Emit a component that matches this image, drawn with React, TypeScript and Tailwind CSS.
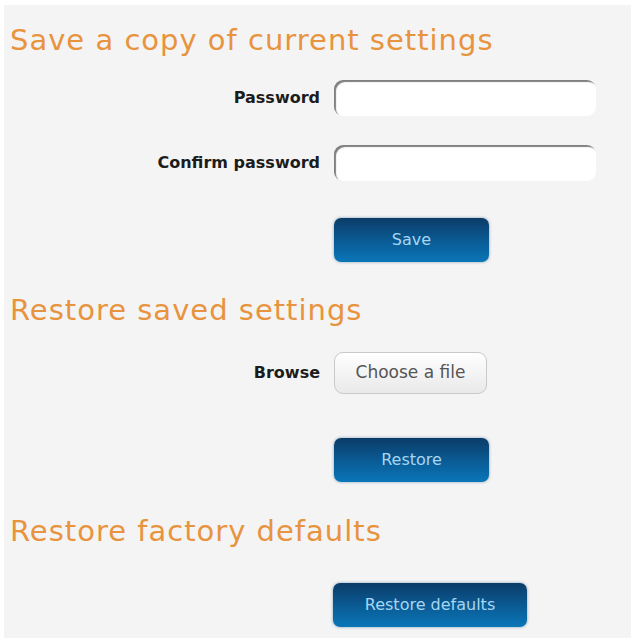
export default function App() {
  const heading = 'text-[29px] leading-[36px] text-[#e8933e] tracking-[1px]'
  const label = 'w-[310px] shrink-0 text-right text-[16px] font-bold text-[#1c1c1c]'
  const blueBtn =
    'h-[44px] rounded-[7px] bg-gradient-to-b from-[#0b3c68] via-[#0a5a93] to-[#0a76b8] text-[16px] text-[#a6d6f3] shadow-[0_0_3px_rgba(10,70,120,0.5)]'
  const field =
    'h-[36px] w-[262px] rounded-[9px] bg-white shadow-[inset_2px_2px_1px_rgba(0,0,0,0.5)] outline-none px-2'

  return (
    <div
      className="w-[640px] h-[642px] bg-white pt-[5px] pl-[4px] pr-[9px] pb-[4px]"
      style={{ fontFamily: '"DejaVu Sans", Verdana, sans-serif' }}
    >
      <div className="h-full bg-[#f4f4f4] pl-[6px] pt-[17px]">
        {/* Save a copy */}
        <h2 className={heading}>Save a copy of current settings</h2>
        <div className="mt-[22px] flex items-center gap-[14px]">
          <span className={label}>Password</span>
          <input type="password" className={field} />
        </div>
        <div className="mt-[29px] flex items-center gap-[14px]">
          <span className={label}>Confirm password</span>
          <input type="password" className={field} />
        </div>
        <div className="mt-[37px] pl-[324px]">
          <button className={`${blueBtn} w-[155px]`}>Save</button>
        </div>

        {/* Restore saved */}
        <h2 className={`${heading} mt-[30px]`}>Restore saved settings</h2>
        <div className="mt-[24px] flex items-center gap-[14px]">
          <span className={label}>Browse</span>
          <button className="h-[42px] w-[153px] rounded-[9px] border border-[#c9c9c9] bg-gradient-to-b from-white to-[#e9e9e9] text-[17px] text-[#555]">
            Choose a file
          </button>
        </div>
        <div className="mt-[44px] pl-[324px]">
          <button className={`${blueBtn} w-[155px]`}>Restore</button>
        </div>

        {/* Factory defaults */}
        <h2 className={`${heading} mt-[31px]`}>Restore factory defaults</h2>
        <div className="mt-[34px] pl-[323px]">
          <button className={`${blueBtn} w-[194px]`}>Restore defaults</button>
        </div>
      </div>
    </div>
  )
}
